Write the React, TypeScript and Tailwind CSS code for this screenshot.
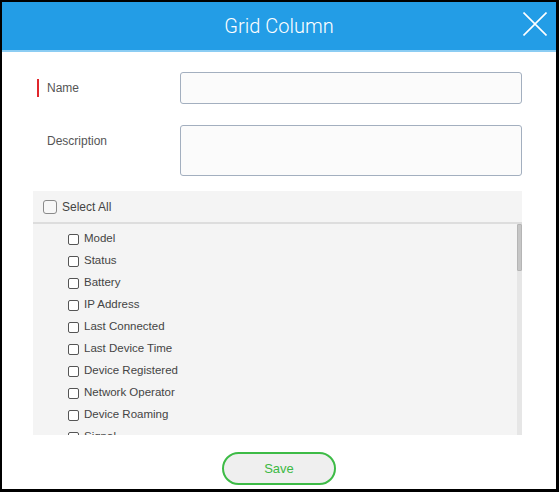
import React from "react";

const items = [
  "Model",
  "Status",
  "Battery",
  "IP Address",
  "Last Connected",
  "Last Device Time",
  "Device Registered",
  "Network Operator",
  "Device Roaming",
  "Signal",
];

export default function App() {
  return (
    <div
      className="w-[559px] h-[492px] box-border border-t-2 border-l-2 border-r-[3px] border-b-[3px] border-black bg-white flex flex-col overflow-hidden"
      style={{ fontFamily: '"Liberation Sans", Arial, sans-serif' }}
    >
      <div className="h-[48px] shrink-0 bg-[#239de6] relative flex items-center justify-center">
        <span
          className="text-white text-[20px] leading-none font-light"
          style={{ fontFamily: 'Roboto, "Liberation Sans", sans-serif' }}
        >
          Grid Column
        </span>
        <svg
          className="absolute right-[9px] top-[10px]"
          width="24"
          height="24"
          viewBox="0 0 24 24"
        >
          <path d="M0.5 0.5 L23.5 23.5 M23.5 0.5 L0.5 23.5" stroke="white" strokeWidth="1.6" fill="none" />
        </svg>
      </div>
      <div className="h-[2px] shrink-0 bg-[#8ccdf3]" />

      <div className="flex flex-col pl-[31px] pr-[34px]">
        <div className="flex items-center mt-[20px]">
          <div className="w-[147px] flex items-center pl-[4px]">
            <div className="w-[2px] h-[18px] bg-[#e0262c]" />
            <span className="ml-[8px] text-[12px] text-[#555]">Name</span>
          </div>
          <div className="flex-1 h-[32px] rounded-[3px] border border-[#a3afbf] bg-[#fbfbfb]" />
        </div>

        <div className="flex items-start mt-[21px]">
          <div className="w-[147px] pl-[14px] pt-[9px] text-[12px] leading-[14px] text-[#555]">
            Description
          </div>
          <div className="flex-1 h-[51px] rounded-[3px] border border-[#a3afbf] bg-[#fbfbfb]" />
        </div>

        <div className="mt-[15px] bg-[#f4f4f4] flex flex-col">
          <div className="h-[33px] flex items-center pl-[10px] border-b-2 border-[#dddddd]">
            <div className="w-[14px] h-[14px] rounded-[3px] border border-[#8a8a8a] bg-[#f7f7f7]" />
            <span className="ml-[5px] text-[12px] text-[#444]">Select All</span>
          </div>
          <div className="h-[211px] flex overflow-hidden">
            <div className="flex-1 flex flex-col pt-[4px] pl-[35px] overflow-hidden">
              {items.map((it) => (
                <div key={it} className="h-[22px] shrink-0 flex items-center">
                  <div className="w-[11px] h-[11px] rounded-[2px] border border-[#555] bg-white" />
                  <span className="ml-[5px] text-[11.5px] text-[#444] whitespace-nowrap">{it}</span>
                </div>
              ))}
            </div>
            <div className="w-[5px] shrink-0 bg-[#e6e6e6] flex flex-col">
              <div className="h-[47px] bg-[#c6c6c6] border border-[#b5b5b5] rounded-[1px]" />
            </div>
          </div>
        </div>

        <div className="flex justify-center mt-[17px] pl-[3px]">
          <div className="w-[114px] h-[33px] rounded-full border-2 border-[#3dbb46] bg-[#efefef] flex items-center justify-center text-[13px] text-[#3cb944]">
            Save
          </div>
        </div>
      </div>
    </div>
  );
}
